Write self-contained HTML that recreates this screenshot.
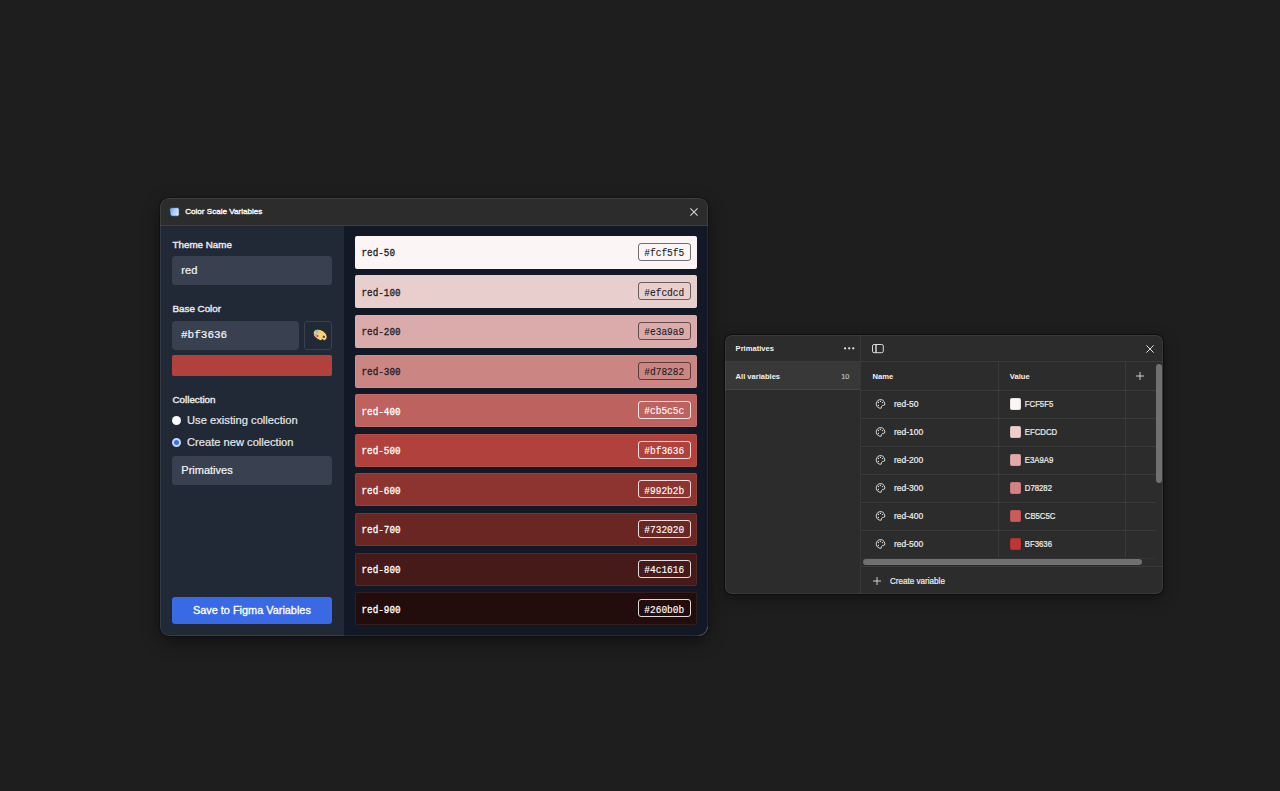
<!DOCTYPE html>
<html><head><meta charset="utf-8">
<style>
*{box-sizing:border-box;margin:0;padding:0}
html,body{width:1280px;height:791px;overflow:hidden;background:#1e1e1e;font-family:"Liberation Sans",sans-serif;position:relative}
.a{position:absolute}
.t{position:absolute;white-space:nowrap;line-height:1}
</style></head><body>
<div class="a" style="left:160px;top:198px;width:548px;height:438px;border-radius:9px;background:#121826;box-shadow:0 0 0 1px rgba(0,0,0,.22),0 6px 18px rgba(0,0,0,.45)"></div>
<div class="a" style="left:160px;top:198px;width:548px;height:438px;border-radius:9px;overflow:hidden"><div class="a" style="left:0;top:0;width:548px;height:28px;background:#2c2c2c;border-bottom:1px solid #3a3d44"></div><div class="a" style="left:0;top:28px;width:184px;height:410px;background:#212936"></div><div class="a" style="left:0;top:0;width:548px;height:438px;border-radius:9px;box-shadow:inset 0 0 0 1px rgba(255,255,255,.09)"></div></div>
<svg class="a" style="left:697px;top:625px" width="12" height="12" viewBox="0 0 12 12"><path d="M10.6 1.5A9.2 9.2 0 0 1 1.5 10.6" fill="none" stroke="#4c5362" stroke-width="1"/></svg>
<svg class="a" style="left:168px;top:206px" width="13" height="12" viewBox="0 0 13 12"><defs><linearGradient id="gi" x1="0" y1="0" x2="1" y2=".4"><stop offset="0" stop-color="#4f9cf4"/><stop offset=".55" stop-color="#a9d0ff"/><stop offset="1" stop-color="#d2e6ff"/></linearGradient></defs><path d="M3.6 1.6H9.6Q11.2 1.6 11.2 3.2V8.6Q11.2 10.2 9.6 10.2H4.2Q2.6 10.2 2.3 8.8L1.6 3.6Q1.6 1.6 3.6 1.6Z" fill="url(#gi)" stroke="#15243a" stroke-width=".7"/></svg>
<div class="t" style="left:185.2px;top:208.34px;font-size:8.1px;color:#f4f4f4;font-weight:normal;-webkit-text-stroke:0.4px #f4f4f4;">Color Scale Variables</div>
<svg class="a" style="left:690px;top:208px" width="8" height="8" viewBox="0 0 8 8"><path d="M.4.4l7.2 7.2M7.6.4L.4 7.6" stroke="#d4d4d4" stroke-width="1.1"/></svg>
<div class="t" style="left:172.5px;top:239.50px;font-size:9.8px;color:#e5e7eb;font-weight:normal;-webkit-text-stroke:0.42px #e5e7eb;">Theme Name</div>
<div class="a" style="left:172px;top:256px;width:160px;height:29px;background:#394150;border-radius:4px"></div>
<div class="t" style="left:181.3px;top:265.30px;font-size:11.1px;color:#f3f4f6;font-weight:normal;-webkit-text-stroke:0.2px #f3f4f6;">red</div>
<div class="t" style="left:172.5px;top:303.70px;font-size:9.8px;color:#e5e7eb;font-weight:normal;-webkit-text-stroke:0.42px #e5e7eb;">Base Color</div>
<div class="a" style="left:172px;top:321px;width:127px;height:29px;background:#394150;border-radius:4px"></div>
<div class="t" style="left:181px;top:330.37px;font-size:11px;color:#f3f4f6;font-weight:normal;font-family:'Liberation Mono',monospace;-webkit-text-stroke:0.2px #f3f4f6;transform-origin:0 8.43px;transform:scaleY(1.06);">#bf3636</div>
<div class="a" style="left:304px;top:321px;width:28px;height:29px;border:1px solid #394150;border-radius:3px"></div>
<svg class="a" style="left:311px;top:327px" width="18" height="16" viewBox="0 0 18 16"><defs><linearGradient id="pe" x1="0" y1="0" x2="1" y2="0"><stop offset="0" stop-color="#d6d36a"/><stop offset=".5" stop-color="#efd46a"/><stop offset="1" stop-color="#f4dca0"/></linearGradient></defs><g transform="rotate(32 9.2 8)"><ellipse cx="9.2" cy="8" rx="7.5" ry="5" fill="url(#pe)" stroke="#2a1c08" stroke-width=".7"/><circle cx="4.6" cy="6.6" r="1.5" fill="#8fc0c8"/><ellipse cx="6.2" cy="10.6" rx="2.6" ry="1.6" fill="#e0a0b0"/><circle cx="7.4" cy="10.3" r=".9" fill="#c04060"/><circle cx="13.2" cy="7.6" r="1.2" fill="#6a4410"/><path d="M13.6 13.2 L12.6 10.4 L15 10.2" fill="#1d2533"/></g></svg>
<div class="a" style="left:172px;top:355px;width:160px;height:21px;background:#b0413c;border-radius:2px"></div>
<div class="t" style="left:172.5px;top:395.20px;font-size:9.8px;color:#e5e7eb;font-weight:normal;-webkit-text-stroke:0.42px #e5e7eb;">Collection</div>
<div class="a" style="left:172.3px;top:416.2px;width:9px;height:9px;border-radius:50%;background:#fafafa"></div>
<div class="t" style="left:187px;top:415.12px;font-size:11.2px;color:#e5e7eb;font-weight:normal;-webkit-text-stroke:0.2px #e5e7eb;">Use existing collection</div>
<div class="a" style="left:172.3px;top:438.4px;width:9px;height:9px;border-radius:50%;background:#3d6fe2;border:2.2px solid #bcdcff"></div>
<div class="t" style="left:187px;top:437.06px;font-size:11.15px;color:#e5e7eb;font-weight:normal;-webkit-text-stroke:0.2px #e5e7eb;">Create new collection</div>
<div class="a" style="left:172px;top:456px;width:160px;height:29px;background:#394150;border-radius:4px"></div>
<div class="t" style="left:181.3px;top:464.66px;font-size:11.03px;color:#f3f4f6;font-weight:normal;-webkit-text-stroke:0.2px #f3f4f6;">Primatives</div>
<div class="a" style="left:172px;top:597px;width:160px;height:27px;background:#3a69e6;border-radius:3px"></div>
<div class="t" style="left:193px;top:605.47px;font-size:10.9px;color:#ffffff;font-weight:normal;-webkit-text-stroke:0.32px #ffffff;">Save to Figma Variables</div>
<div class="a" style="left:355px;top:235.8px;width:342px;height:33px;background:#fbf5f5;border-radius:2px;box-shadow:inset 0 0 0 1px rgba(255,255,255,.07)"></div>
<div class="t" style="left:361.5px;top:249.07px;font-size:9.3px;color:#1d1d1f;font-weight:normal;font-family:'Liberation Mono',monospace;-webkit-text-stroke:0.28px #1d1d1f;transform-origin:0 7.13px;transform:scaleY(1.1);">red-50</div>
<div class="a" style="left:638px;top:242.8px;width:53px;height:18px;border:1px solid rgba(0,0,0,.55);border-radius:3px"></div>
<div class="t" style="left:644.3px;top:249.02px;font-size:9.5px;color:#1d1d1f;font-weight:normal;font-family:'Liberation Mono',monospace;-webkit-text-stroke:0.12px #1d1d1f;transform-origin:0 7.28px;transform:scaleY(1.1);">#fcf5f5</div>
<div class="a" style="left:355px;top:275.41px;width:342px;height:33px;background:#e9cece;border-radius:2px;box-shadow:inset 0 0 0 1px rgba(255,255,255,.07)"></div>
<div class="t" style="left:361.5px;top:288.68px;font-size:9.3px;color:#1d1d1f;font-weight:normal;font-family:'Liberation Mono',monospace;-webkit-text-stroke:0.28px #1d1d1f;transform-origin:0 7.13px;transform:scaleY(1.1);">red-100</div>
<div class="a" style="left:638px;top:282.41px;width:53px;height:18px;border:1px solid rgba(0,0,0,.55);border-radius:3px"></div>
<div class="t" style="left:644.3px;top:288.63px;font-size:9.5px;color:#1d1d1f;font-weight:normal;font-family:'Liberation Mono',monospace;-webkit-text-stroke:0.12px #1d1d1f;transform-origin:0 7.28px;transform:scaleY(1.1);">#efcdcd</div>
<div class="a" style="left:355px;top:315.02px;width:342px;height:33px;background:#daabaa;border-radius:2px;box-shadow:inset 0 0 0 1px rgba(255,255,255,.07)"></div>
<div class="t" style="left:361.5px;top:328.29px;font-size:9.3px;color:#1d1d1f;font-weight:normal;font-family:'Liberation Mono',monospace;-webkit-text-stroke:0.28px #1d1d1f;transform-origin:0 7.13px;transform:scaleY(1.1);">red-200</div>
<div class="a" style="left:638px;top:322.02px;width:53px;height:18px;border:1px solid rgba(0,0,0,.55);border-radius:3px"></div>
<div class="t" style="left:644.3px;top:328.24px;font-size:9.5px;color:#1d1d1f;font-weight:normal;font-family:'Liberation Mono',monospace;-webkit-text-stroke:0.12px #1d1d1f;transform-origin:0 7.28px;transform:scaleY(1.1);">#e3a9a9</div>
<div class="a" style="left:355px;top:354.63px;width:342px;height:33px;background:#cb8684;border-radius:2px;box-shadow:inset 0 0 0 1px rgba(255,255,255,.07)"></div>
<div class="t" style="left:361.5px;top:367.90px;font-size:9.3px;color:#1d1d1f;font-weight:normal;font-family:'Liberation Mono',monospace;-webkit-text-stroke:0.28px #1d1d1f;transform-origin:0 7.13px;transform:scaleY(1.1);">red-300</div>
<div class="a" style="left:638px;top:361.63px;width:53px;height:18px;border:1px solid rgba(0,0,0,.55);border-radius:3px"></div>
<div class="t" style="left:644.3px;top:367.85px;font-size:9.5px;color:#1d1d1f;font-weight:normal;font-family:'Liberation Mono',monospace;-webkit-text-stroke:0.12px #1d1d1f;transform-origin:0 7.28px;transform:scaleY(1.1);">#d78282</div>
<div class="a" style="left:355px;top:394.24px;width:342px;height:33px;background:#bd625f;border-radius:2px;box-shadow:inset 0 0 0 1px rgba(255,255,255,.07)"></div>
<div class="t" style="left:361.5px;top:407.51px;font-size:9.3px;color:#ffffff;font-weight:normal;font-family:'Liberation Mono',monospace;-webkit-text-stroke:0.28px #ffffff;transform-origin:0 7.13px;transform:scaleY(1.1);">red-400</div>
<div class="a" style="left:638px;top:401.24px;width:53px;height:18px;border:1px solid rgba(255,255,255,.85);border-radius:3px"></div>
<div class="t" style="left:644.3px;top:407.46px;font-size:9.5px;color:#ffffff;font-weight:normal;font-family:'Liberation Mono',monospace;-webkit-text-stroke:0.12px #ffffff;transform-origin:0 7.28px;transform:scaleY(1.1);">#cb5c5c</div>
<div class="a" style="left:355px;top:433.85px;width:342px;height:33px;background:#b0413c;border-radius:2px;box-shadow:inset 0 0 0 1px rgba(255,255,255,.07)"></div>
<div class="t" style="left:361.5px;top:447.12px;font-size:9.3px;color:#ffffff;font-weight:normal;font-family:'Liberation Mono',monospace;-webkit-text-stroke:0.28px #ffffff;transform-origin:0 7.13px;transform:scaleY(1.1);">red-500</div>
<div class="a" style="left:638px;top:440.85px;width:53px;height:18px;border:1px solid rgba(255,255,255,.85);border-radius:3px"></div>
<div class="t" style="left:644.3px;top:447.07px;font-size:9.5px;color:#ffffff;font-weight:normal;font-family:'Liberation Mono',monospace;-webkit-text-stroke:0.12px #ffffff;transform-origin:0 7.28px;transform:scaleY(1.1);">#bf3636</div>
<div class="a" style="left:355px;top:473.46px;width:342px;height:33px;background:#8d3430;border-radius:2px;box-shadow:inset 0 0 0 1px rgba(255,255,255,.07)"></div>
<div class="t" style="left:361.5px;top:486.73px;font-size:9.3px;color:#ffffff;font-weight:normal;font-family:'Liberation Mono',monospace;-webkit-text-stroke:0.28px #ffffff;transform-origin:0 7.13px;transform:scaleY(1.1);">red-600</div>
<div class="a" style="left:638px;top:480.46px;width:53px;height:18px;border:1px solid rgba(255,255,255,.85);border-radius:3px"></div>
<div class="t" style="left:644.3px;top:486.68px;font-size:9.5px;color:#ffffff;font-weight:normal;font-family:'Liberation Mono',monospace;-webkit-text-stroke:0.12px #ffffff;transform-origin:0 7.28px;transform:scaleY(1.1);">#992b2b</div>
<div class="a" style="left:355px;top:513.07px;width:342px;height:33px;background:#6a2623;border-radius:2px;box-shadow:inset 0 0 0 1px rgba(255,255,255,.07)"></div>
<div class="t" style="left:361.5px;top:526.34px;font-size:9.3px;color:#ffffff;font-weight:normal;font-family:'Liberation Mono',monospace;-webkit-text-stroke:0.28px #ffffff;transform-origin:0 7.13px;transform:scaleY(1.1);">red-700</div>
<div class="a" style="left:638px;top:520.07px;width:53px;height:18px;border:1px solid rgba(255,255,255,.85);border-radius:3px"></div>
<div class="t" style="left:644.3px;top:526.29px;font-size:9.5px;color:#ffffff;font-weight:normal;font-family:'Liberation Mono',monospace;-webkit-text-stroke:0.12px #ffffff;transform-origin:0 7.28px;transform:scaleY(1.1);">#732020</div>
<div class="a" style="left:355px;top:552.68px;width:342px;height:33px;background:#461a18;border-radius:2px;box-shadow:inset 0 0 0 1px rgba(255,255,255,.07)"></div>
<div class="t" style="left:361.5px;top:565.95px;font-size:9.3px;color:#ffffff;font-weight:normal;font-family:'Liberation Mono',monospace;-webkit-text-stroke:0.28px #ffffff;transform-origin:0 7.13px;transform:scaleY(1.1);">red-800</div>
<div class="a" style="left:638px;top:559.68px;width:53px;height:18px;border:1px solid rgba(255,255,255,.85);border-radius:3px"></div>
<div class="t" style="left:644.3px;top:565.90px;font-size:9.5px;color:#ffffff;font-weight:normal;font-family:'Liberation Mono',monospace;-webkit-text-stroke:0.12px #ffffff;transform-origin:0 7.28px;transform:scaleY(1.1);">#4c1616</div>
<div class="a" style="left:355px;top:592.29px;width:342px;height:33px;background:#230d0c;border-radius:2px;box-shadow:inset 0 0 0 1px rgba(255,255,255,.07)"></div>
<div class="t" style="left:361.5px;top:605.56px;font-size:9.3px;color:#ffffff;font-weight:normal;font-family:'Liberation Mono',monospace;-webkit-text-stroke:0.28px #ffffff;transform-origin:0 7.13px;transform:scaleY(1.1);">red-900</div>
<div class="a" style="left:638px;top:599.29px;width:53px;height:18px;border:1px solid rgba(255,255,255,.85);border-radius:3px"></div>
<div class="t" style="left:644.3px;top:605.51px;font-size:9.5px;color:#ffffff;font-weight:normal;font-family:'Liberation Mono',monospace;-webkit-text-stroke:0.12px #ffffff;transform-origin:0 7.28px;transform:scaleY(1.1);">#260b0b</div>
<div class="a" style="left:725px;top:335px;width:438px;height:259px;border-radius:7px;background:#2c2c2c;box-shadow:0 0 0 1px rgba(0,0,0,.45),0 5px 16px rgba(0,0,0,.4)"></div>
<div class="a" style="left:725px;top:361px;width:136px;height:29px;background:#383838"></div>
<div class="a" style="left:725px;top:361px;width:136px;height:1px;background:#3a3a3a"></div>
<div class="a" style="left:725px;top:389px;width:136px;height:1px;background:#444"></div>
<div class="a" style="left:860px;top:335px;width:1px;height:259px;background:#383838"></div>
<div class="t" style="left:735.6px;top:345.07px;font-size:7.6px;color:#f2f2f2;font-weight:bold;">Primatives</div>
<svg class="a" style="left:842px;top:345px" width="14" height="7" viewBox="0 0 14 7"><circle cx="3.1" cy="3.3" r="1.15" fill="#e8e8e8"/><circle cx="7.2" cy="3.3" r="1.15" fill="#e8e8e8"/><circle cx="11.3" cy="3.3" r="1.15" fill="#e8e8e8"/></svg>
<div class="t" style="left:735.6px;top:373.21px;font-size:7.55px;color:#f2f2f2;font-weight:bold;">All variables</div>
<div class="t" style="left:841.3px;top:373.42px;font-size:7.3px;color:#bdbdbd;font-weight:normal;-webkit-text-stroke:0.2px #bdbdbd;">10</div>
<svg class="a" style="left:871px;top:343px" width="14" height="11" viewBox="0 0 14 11"><rect x="1.5" y="1.5" width="10.8" height="8.2" rx="1.6" fill="none" stroke="#dcdcdc" stroke-width="1"/><rect x="4.3" y="1.5" width="1.4" height="8.2" fill="#dcdcdc"/></svg>
<svg class="a" style="left:1146px;top:344.5px" width="8" height="8" viewBox="0 0 8 8"><path d="M.4.4l7.2 7.2M7.6.4L.4 7.6" stroke="#e0e0e0" stroke-width="1"/></svg>
<div class="a" style="left:861px;top:361px;width:302px;height:1px;background:#3a3a3a"></div>
<div class="a" style="left:861px;top:390px;width:295px;height:1px;background:#3a3a3a"></div>
<div class="t" style="left:872.5px;top:372.77px;font-size:7.6px;color:#f2f2f2;font-weight:bold;">Name</div>
<div class="t" style="left:1009.8px;top:372.77px;font-size:7.6px;color:#f2f2f2;font-weight:bold;">Value</div>
<svg class="a" style="left:1135.5px;top:371.6px" width="8" height="8" viewBox="0 0 8 8"><path d="M4 0v8M0 4h8" stroke="#e0e0e0" stroke-width=".9"/></svg>
<div class="a" style="left:998px;top:361px;width:1px;height:196px;background:#3a3a3a"></div>
<div class="a" style="left:1125px;top:361px;width:1px;height:196px;background:#3a3a3a"></div>
<div class="a" style="left:861px;top:418px;width:295px;height:1px;background:#3a3a3a"></div>
<svg class="a" style="left:874px;top:397px" width="13" height="13" viewBox="0 0 13 13"><path d="M10.65 8.0A4.3 4.3 0 1 0 7.3 11.13C7.55 10.6 7.45 9.9 7.65 9.3C7.95 8.65 8.6 8.4 9.3 8.4C9.9 8.4 10.4 8.3 10.65 8.0Z" fill="none" stroke="#e0e0e0" stroke-width=".95" stroke-linejoin="round"/><circle cx="6.4" cy="4.4" r=".65" fill="#e8e8e8"/><circle cx="4.4" cy="5.5" r=".65" fill="#e8e8e8"/><circle cx="8.5" cy="5.6" r=".65" fill="#e8e8e8"/><circle cx="4.4" cy="8.4" r=".65" fill="#e8e8e8"/></svg>
<div class="t" style="left:894px;top:399.80px;font-size:8.5px;color:#ececec;font-weight:normal;-webkit-text-stroke:0.2px #ececec;">red-50</div>
<div class="a" style="left:1010px;top:398.3px;width:11px;height:11.5px;background:#fcf5f5;border-radius:2px;box-shadow:inset 0 0 0 1px rgba(0,0,0,.08)"></div>
<div class="t" style="left:1024.8px;top:400.54px;font-size:7.75px;color:#ececec;font-weight:normal;-webkit-text-stroke:0.2px #ececec;transform-origin:0 6.56px;transform:scaleY(1.12);">FCF5F5</div>
<div class="a" style="left:861px;top:446px;width:295px;height:1px;background:#3a3a3a"></div>
<svg class="a" style="left:874px;top:425px" width="13" height="13" viewBox="0 0 13 13"><path d="M10.65 8.0A4.3 4.3 0 1 0 7.3 11.13C7.55 10.6 7.45 9.9 7.65 9.3C7.95 8.65 8.6 8.4 9.3 8.4C9.9 8.4 10.4 8.3 10.65 8.0Z" fill="none" stroke="#e0e0e0" stroke-width=".95" stroke-linejoin="round"/><circle cx="6.4" cy="4.4" r=".65" fill="#e8e8e8"/><circle cx="4.4" cy="5.5" r=".65" fill="#e8e8e8"/><circle cx="8.5" cy="5.6" r=".65" fill="#e8e8e8"/><circle cx="4.4" cy="8.4" r=".65" fill="#e8e8e8"/></svg>
<div class="t" style="left:894px;top:427.80px;font-size:8.5px;color:#ececec;font-weight:normal;-webkit-text-stroke:0.2px #ececec;">red-100</div>
<div class="a" style="left:1010px;top:426.3px;width:11px;height:11.5px;background:#efcdcd;border-radius:2px;box-shadow:inset 0 0 0 1px rgba(0,0,0,.08)"></div>
<div class="t" style="left:1024.8px;top:428.54px;font-size:7.75px;color:#ececec;font-weight:normal;-webkit-text-stroke:0.2px #ececec;transform-origin:0 6.56px;transform:scaleY(1.12);">EFCDCD</div>
<div class="a" style="left:861px;top:474px;width:295px;height:1px;background:#3a3a3a"></div>
<svg class="a" style="left:874px;top:453px" width="13" height="13" viewBox="0 0 13 13"><path d="M10.65 8.0A4.3 4.3 0 1 0 7.3 11.13C7.55 10.6 7.45 9.9 7.65 9.3C7.95 8.65 8.6 8.4 9.3 8.4C9.9 8.4 10.4 8.3 10.65 8.0Z" fill="none" stroke="#e0e0e0" stroke-width=".95" stroke-linejoin="round"/><circle cx="6.4" cy="4.4" r=".65" fill="#e8e8e8"/><circle cx="4.4" cy="5.5" r=".65" fill="#e8e8e8"/><circle cx="8.5" cy="5.6" r=".65" fill="#e8e8e8"/><circle cx="4.4" cy="8.4" r=".65" fill="#e8e8e8"/></svg>
<div class="t" style="left:894px;top:455.80px;font-size:8.5px;color:#ececec;font-weight:normal;-webkit-text-stroke:0.2px #ececec;">red-200</div>
<div class="a" style="left:1010px;top:454.3px;width:11px;height:11.5px;background:#e3a9a9;border-radius:2px;box-shadow:inset 0 0 0 1px rgba(0,0,0,.08)"></div>
<div class="t" style="left:1024.8px;top:456.54px;font-size:7.75px;color:#ececec;font-weight:normal;-webkit-text-stroke:0.2px #ececec;transform-origin:0 6.56px;transform:scaleY(1.12);">E3A9A9</div>
<div class="a" style="left:861px;top:502px;width:295px;height:1px;background:#3a3a3a"></div>
<svg class="a" style="left:874px;top:481px" width="13" height="13" viewBox="0 0 13 13"><path d="M10.65 8.0A4.3 4.3 0 1 0 7.3 11.13C7.55 10.6 7.45 9.9 7.65 9.3C7.95 8.65 8.6 8.4 9.3 8.4C9.9 8.4 10.4 8.3 10.65 8.0Z" fill="none" stroke="#e0e0e0" stroke-width=".95" stroke-linejoin="round"/><circle cx="6.4" cy="4.4" r=".65" fill="#e8e8e8"/><circle cx="4.4" cy="5.5" r=".65" fill="#e8e8e8"/><circle cx="8.5" cy="5.6" r=".65" fill="#e8e8e8"/><circle cx="4.4" cy="8.4" r=".65" fill="#e8e8e8"/></svg>
<div class="t" style="left:894px;top:483.80px;font-size:8.5px;color:#ececec;font-weight:normal;-webkit-text-stroke:0.2px #ececec;">red-300</div>
<div class="a" style="left:1010px;top:482.3px;width:11px;height:11.5px;background:#d78282;border-radius:2px;box-shadow:inset 0 0 0 1px rgba(0,0,0,.08)"></div>
<div class="t" style="left:1024.8px;top:484.54px;font-size:7.75px;color:#ececec;font-weight:normal;-webkit-text-stroke:0.2px #ececec;transform-origin:0 6.56px;transform:scaleY(1.12);">D78282</div>
<div class="a" style="left:861px;top:530px;width:295px;height:1px;background:#3a3a3a"></div>
<svg class="a" style="left:874px;top:509px" width="13" height="13" viewBox="0 0 13 13"><path d="M10.65 8.0A4.3 4.3 0 1 0 7.3 11.13C7.55 10.6 7.45 9.9 7.65 9.3C7.95 8.65 8.6 8.4 9.3 8.4C9.9 8.4 10.4 8.3 10.65 8.0Z" fill="none" stroke="#e0e0e0" stroke-width=".95" stroke-linejoin="round"/><circle cx="6.4" cy="4.4" r=".65" fill="#e8e8e8"/><circle cx="4.4" cy="5.5" r=".65" fill="#e8e8e8"/><circle cx="8.5" cy="5.6" r=".65" fill="#e8e8e8"/><circle cx="4.4" cy="8.4" r=".65" fill="#e8e8e8"/></svg>
<div class="t" style="left:894px;top:511.80px;font-size:8.5px;color:#ececec;font-weight:normal;-webkit-text-stroke:0.2px #ececec;">red-400</div>
<div class="a" style="left:1010px;top:510.3px;width:11px;height:11.5px;background:#cb5c5c;border-radius:2px;box-shadow:inset 0 0 0 1px rgba(0,0,0,.08)"></div>
<div class="t" style="left:1024.8px;top:512.54px;font-size:7.75px;color:#ececec;font-weight:normal;-webkit-text-stroke:0.2px #ececec;transform-origin:0 6.56px;transform:scaleY(1.12);">CB5C5C</div>
<div class="a" style="left:861px;top:558px;width:295px;height:1px;background:#333"></div>
<svg class="a" style="left:874px;top:537px" width="13" height="13" viewBox="0 0 13 13"><path d="M10.65 8.0A4.3 4.3 0 1 0 7.3 11.13C7.55 10.6 7.45 9.9 7.65 9.3C7.95 8.65 8.6 8.4 9.3 8.4C9.9 8.4 10.4 8.3 10.65 8.0Z" fill="none" stroke="#e0e0e0" stroke-width=".95" stroke-linejoin="round"/><circle cx="6.4" cy="4.4" r=".65" fill="#e8e8e8"/><circle cx="4.4" cy="5.5" r=".65" fill="#e8e8e8"/><circle cx="8.5" cy="5.6" r=".65" fill="#e8e8e8"/><circle cx="4.4" cy="8.4" r=".65" fill="#e8e8e8"/></svg>
<div class="t" style="left:894px;top:539.80px;font-size:8.5px;color:#ececec;font-weight:normal;-webkit-text-stroke:0.2px #ececec;">red-500</div>
<div class="a" style="left:1010px;top:538.3px;width:11px;height:11.5px;background:#bf3636;border-radius:2px;box-shadow:inset 0 0 0 1px rgba(0,0,0,.08)"></div>
<div class="t" style="left:1024.8px;top:540.54px;font-size:7.75px;color:#ececec;font-weight:normal;-webkit-text-stroke:0.2px #ececec;transform-origin:0 6.56px;transform:scaleY(1.12);">BF3636</div>
<div class="a" style="left:1156px;top:364px;width:6px;height:119px;background:#707070;border-radius:3px"></div>
<div class="a" style="left:863px;top:559px;width:279px;height:6px;background:#707070;border-radius:3px"></div>
<div class="a" style="left:861px;top:566px;width:302px;height:1px;background:#3a3a3a"></div>
<svg class="a" style="left:872.5px;top:576.5px" width="8" height="8" viewBox="0 0 8 8"><path d="M4 0v8M0 4h8" stroke="#e0e0e0" stroke-width=".9"/></svg>
<div class="t" style="left:890px;top:578.14px;font-size:8.1px;color:#ececec;font-weight:normal;-webkit-text-stroke:0.2px #ececec;transform-origin:0 6.86px;transform:scaleY(1.08);">Create variable</div>
<div class="a" style="left:725px;top:335px;width:438px;height:259px;border-radius:7px;box-shadow:inset 0 0 0 1px rgba(255,255,255,.07)"></div>
</body></html>
